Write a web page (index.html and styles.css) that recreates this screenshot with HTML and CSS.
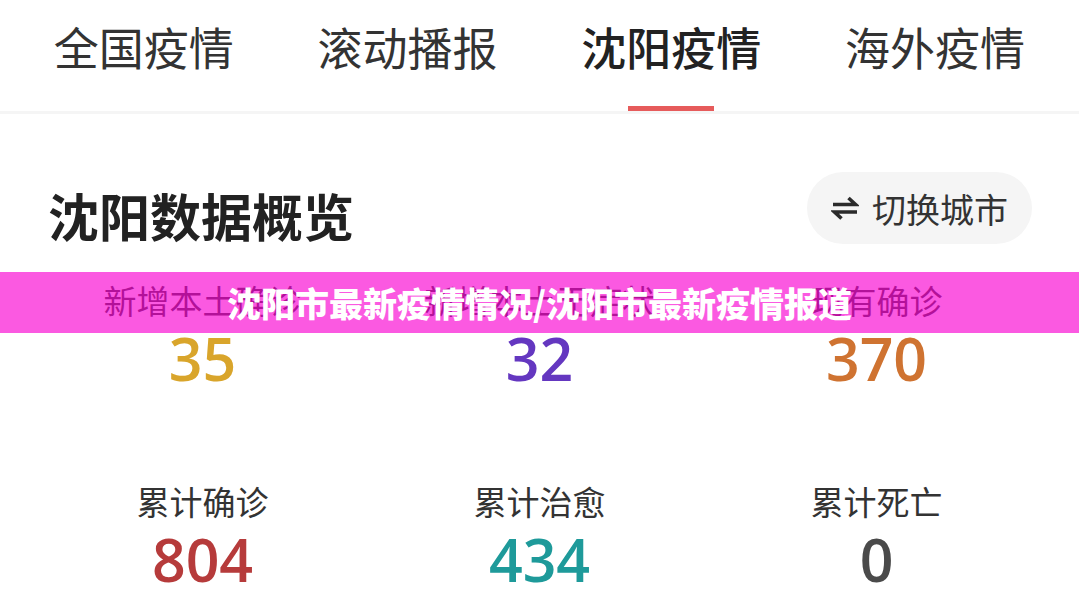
FILE: index.html
```html
<!DOCTYPE html>
<html lang="zh-CN">
<head>
    <meta charset="UTF-8">
    <meta name="viewport" content="width=device-width, initial-scale=1.0">
    <title>沈阳疫情</title>
    <link rel="stylesheet" href="styles.css">
</head>
<body>
<nav class="tabs">
    <div class="tab"><span class="tab-text">全国疫情</span></div>
    <div class="tab"><span class="tab-text">滚动播报</span></div>
    <div class="tab active"><span class="tab-text">沈阳疫情</span><i class="tab-bar"></i></div>
    <div class="tab"><span class="tab-text">海外疫情</span></div>
</nav>

<section class="overview">
    <div class="overview-head">
        <h1>沈阳数据概览</h1>
        <button class="switch-city">
            <svg class="switch-icon" viewBox="0 0 28 28" width="28" height="28">
                <path d="M2 10.5h22.5l-7-6.5" fill="none" stroke="#2b2b2b" stroke-width="3.6"/>
                <path d="M26 18H3.5l7 6.5" fill="none" stroke="#2b2b2b" stroke-width="3.6"/>
            </svg>
            <span>切换城市</span>
        </button>
    </div>

    <div class="stats">
        <div class="stat">
            <div class="stat-label">新增本土确诊</div>
            <div class="stat-value gold">35</div>
        </div>
        <div class="stat">
            <div class="stat-label">新增本土无症状</div>
            <div class="stat-value purple">32</div>
        </div>
        <div class="stat">
            <div class="stat-label">现有确诊</div>
            <div class="stat-value orange">370</div>
        </div>
        <div class="stat">
            <div class="stat-label">累计确诊</div>
            <div class="stat-value red">804</div>
        </div>
        <div class="stat">
            <div class="stat-label">累计治愈</div>
            <div class="stat-value teal">434</div>
        </div>
        <div class="stat">
            <div class="stat-label">累计死亡</div>
            <div class="stat-value gray">0</div>
        </div>
    </div>
</section>

<div class="banner">沈阳市最新疫情情况/沈阳市最新疫情报道</div>
</body>
</html>
```

FILE: styles.css
```css
html {
    background-color: #ffffff;
    color: #333333;
    font-family: "Noto Sans CJK SC", "Noto Sans", sans-serif;
}

body {
    margin: 0;
    position: relative;
    min-height: 606px;
    overflow: hidden;
}

/* top tabs */
.tabs {
    display: flex;
    padding: 20px 12px 0;
    height: 114px;
    box-sizing: border-box;
    border-bottom: 3px solid #f5f5f5;
}

.tab {
    flex: 1;
    display: flex;
    flex-direction: column;
    align-items: center;
}

.tab-text {
    font-size: 45px;
    line-height: 54px;
    color: #333333;
    white-space: nowrap;
}

.tab.active .tab-text {
    color: #222222;
    font-weight: 500;
}

.tab-bar {
    display: block;
    width: 86px;
    height: 8px;
    margin-top: 32px;
    background-color: #e65b5b;
}

/* overview block */
.overview {
    padding: 58px 47px 0 48px;
}

.overview-head {
    display: flex;
    justify-content: space-between;
    align-items: flex-start;
}

h1 {
    margin: 0;
    padding-top: 7px;
    font-size: 51px;
    line-height: 72px;
    font-weight: 700;
    color: #222222;
}

.switch-city {
    display: flex;
    align-items: center;
    gap: 13px;
    height: 72px;
    padding: 0 24px;
    border: none;
    border-radius: 36px;
    background-color: #f5f5f5;
    font-family: inherit;
    font-size: 34px;
    color: #333333;
    cursor: pointer;
}

.switch-icon {
    display: block;
}

.stats {
    display: grid;
    grid-template-columns: repeat(3, 1fr);
    row-gap: 89px;
    margin: 0 -13px 0 -14px;
    padding-top: 27px;
}

.stat {
    display: flex;
    flex-direction: column;
    align-items: center;
}

.stat-label {
    font-size: 33px;
    line-height: 44px;
    color: #333333;
    white-space: nowrap;
}

.stat-value {
    margin-top: 4px;
    font-family: "Open Sans", sans-serif;
    font-size: 59px;
    line-height: 64px;
    font-weight: 600;
}

.gold { color: #d9a52b; }
.purple { color: #6437c0; }
.orange { color: #cf7331; }
.red { color: #b63b3b; }
.teal { color: #1e9a9a; }
.gray { color: #4a4a4a; }

/* title strip laid over the page */
.banner {
    position: absolute;
    left: 0;
    right: 0;
    top: 272px;
    height: 61px;
    background-color: rgba(249, 0, 209, 0.65);
    color: #ffffff;
    font-size: 34px;
    font-weight: 900;
    line-height: 61px;
    text-align: center;
    white-space: nowrap;
}
```
